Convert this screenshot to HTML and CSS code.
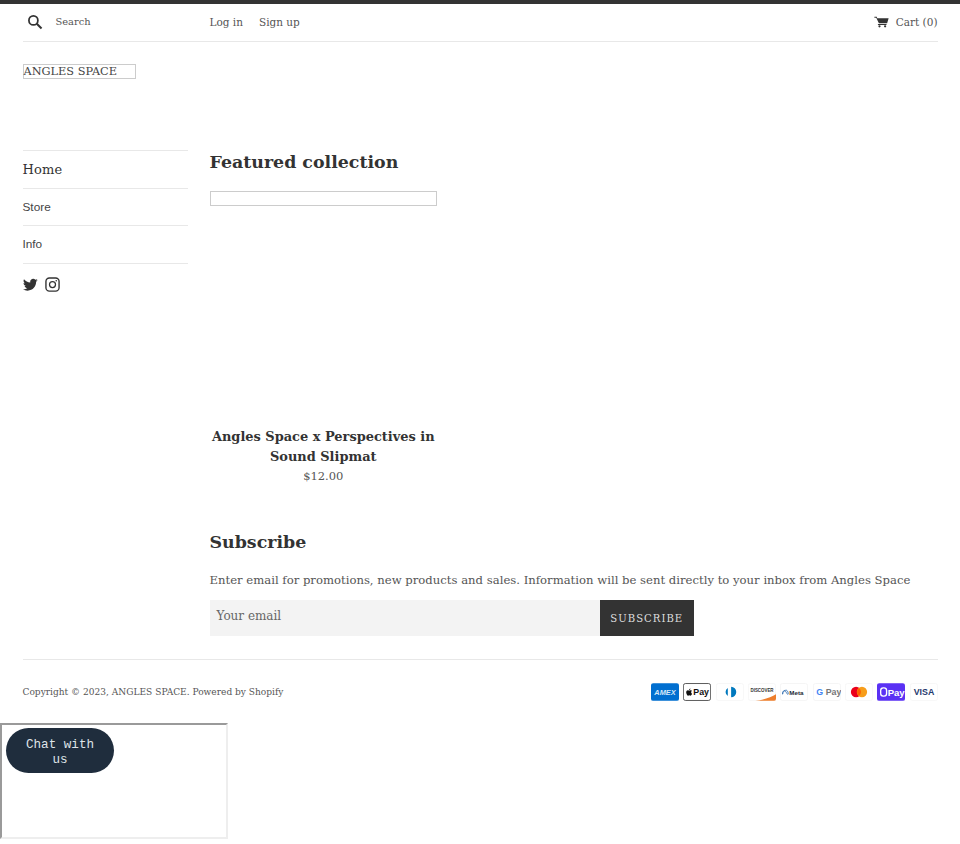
FILE: index.html
```html
<!DOCTYPE html>
<html lang="en">
<head>
<meta charset="utf-8">
<title>ANGLES SPACE</title>
<link rel="stylesheet" href="styles.css">
</head>
<body>
<div class="topbar"></div>
<div class="page">
  <header class="header">
    <form class="search">
      <svg class="search-icon" viewBox="0 0 20 20"><circle cx="8" cy="8" r="5.6" fill="none" stroke="#333" stroke-width="2.2"/><path d="M12.200 12.200l6 6" stroke="#333" stroke-width="2.500" fill="none"/></svg>
      <span class="search-label">Search</span>
    </form>
    <nav class="account"><a>Log in</a><a>Sign up</a></nav>
    <a class="cart">
      <svg class="cart-icon" viewBox="0 0 20 16"><path d="M.5 1h3.200l.6 2h15.200l-2 6.700H6.500L3 2.300H.5z" fill="#333"/><path d="M5.500 10.700h11.200v1.200H5z" fill="#333"/><circle cx="7.300" cy="13.800" r="1.500" fill="#333"/><circle cx="14.800" cy="13.800" r="1.500" fill="#333"/></svg>
      <span>Cart (0)</span>
    </a>
  </header>
  <div class="logo">ANGLES SPACE</div>
  <div class="layout">
    <aside class="sidebar">
      <ul class="menu">
        <li class="menu-item menu-active">Home</li>
        <li class="menu-item">Store</li>
        <li class="menu-item">Info</li>
      </ul>
      <div class="social">
        <svg class="social-icon" viewBox="0 0 24 24"><path fill="#333" d="M23.6 5.1c-.9.4-1.8.6-2.8.8 1-.6 1.8-1.5 2.1-2.7-.9.6-2 1-3.100 1.200C18.900 3.400 17.700 2.800 16.300 2.800c-2.700 0-4.800 2.200-4.800 4.800 0 .4 0 .8.100 1.100C7.600 8.500 4 6.600 1.600 3.600c-.4.700-.7 1.500-.7 2.400 0 1.700.9 3.200 2.100 4-.8 0-1.500-.2-2.200-.6v.1c0 2.300 1.700 4.300 3.900 4.700-.4.100-.8.200-1.300.2-.3 0-.6 0-.9-.1.6 1.900 2.400 3.300 4.500 3.300-1.600 1.300-3.700 2-6 2-.4 0-.8 0-1.100-.1C2 21 4.500 21.800 7.300 21.800c8.800 0 13.700-7.300 13.700-13.700v-.6c.9-.7 1.800-1.500 2.600-2.400z"/></svg>
        <svg class="social-icon" viewBox="0 0 24 24"><rect x="1.500" y="1.500" width="21" height="21" rx="5.500" fill="none" stroke="#333" stroke-width="2.200"/><circle cx="12" cy="12" r="4.800" fill="none" stroke="#333" stroke-width="2"/><circle cx="18" cy="6" r="1.300" fill="#333"/></svg>
      </div>
    </aside>
    <main class="main">
      <h2 class="section-title">Featured collection</h2>
      <div class="grid">
        <article class="product">
          <div class="product-image"></div>
          <h3 class="product-title">Angles Space x Perspectives in Sound Slipmat</h3>
          <div class="product-price">$12.00</div>
        </article>
      </div>
      <section class="subscribe">
        <h2 class="section-title">Subscribe</h2>
        <p class="subscribe-text">Enter email for promotions, new products and sales. Information will be sent directly to your inbox from Angles Space</p>
        <form class="subscribe-form">
          <div class="email">Your email</div>
          <div class="subscribe-btn">SUBSCRIBE</div>
        </form>
      </section>
    </main>
  </div>
  <footer class="footer">
    <div class="copyright">Copyright © 2023, ANGLES SPACE. Powered by Shopify</div>
    <div class="payments">
      <svg class="pay" viewBox="0 0 38 24"><rect width="38" height="24" rx="3" fill="#016fd0"/><text x="19" y="16" class="t-amex">AMEX</text></svg>
      <svg class="pay" viewBox="0 0 38 24"><rect x=".5" y=".5" width="37" height="23" rx="3" fill="#fff" stroke="#222"/><path fill="#111" d="M9.500 7.500c.5-.6.900-1.400.8-2.200-.7 0-1.600.5-2.100 1.100-.4.500-.8 1.300-.7 2.100.8 0 1.500-.4 2-1zm.8 1.200c-1.100-.1-2.100.6-2.600.6-.6 0-1.400-.6-2.300-.6-1.200 0-2.300.7-2.900 1.700-1.200 2.100-.3 5.300.9 7 .6.900 1.300 1.800 2.200 1.800.9 0 1.200-.6 2.300-.6s1.400.6 2.300.6c1 0 1.600-.9 2.200-1.700.7-1 1-1.900 1-2-.1 0-1.900-.7-1.900-2.800 0-1.800 1.400-2.600 1.500-2.700-.8-1.200-2-1.300-2.700-1.300z" transform="translate(3 3.500) scale(.7)"/><text x="14" y="16.500" class="t-pay">Pay</text></svg>
      <svg class="pay" viewBox="0 0 38 24"><rect x=".5" y=".5" width="37" height="23" rx="3" fill="#fff" stroke="#f4f4f4"/><path d="M17 6.500a6.500 6.500 0 000 11z" fill="#0079be" transform="translate(-1 0)"/><path d="M19 5a7 7 0 010 14z" fill="#0079be" transform="translate(1.500 0)"/></svg>
      <svg class="pay" viewBox="0 0 38 24"><rect x=".5" y=".5" width="37" height="23" rx="3" fill="#fff" stroke="#f4f4f4"/><path d="M10 24c12-1.500 22-5 28-9v6a3 3 0 01-3 3z" fill="#ee7f2d"/><text x="19" y="11.500" class="t-disc">DISCOVER</text></svg>
      <svg class="pay" viewBox="0 0 38 24"><rect x=".5" y=".5" width="37" height="23" rx="3" fill="#fff" stroke="#f2f2f2"/><path d="M3.500 15c0-5 2.500-6 4-4s2.500 5 3.500 4-1-5.500-2.500-5.500S3.500 11 3.500 15z" fill="none" stroke="#1c5fa8" stroke-width="1"/><text x="12.500" y="15.500" class="t-meta">Meta</text></svg>
      <svg class="pay" viewBox="0 0 38 24"><rect x=".5" y=".5" width="37" height="23" rx="3" fill="#fff" stroke="#f2f2f2"/><text x="4.500" y="16.500" class="t-gpay"><tspan class="g-blue">G</tspan> Pay</text></svg>
      <svg class="pay" viewBox="0 0 38 24"><rect x=".5" y=".5" width="37" height="23" rx="3" fill="#fff" stroke="#f4f4f4"/><circle cx="15" cy="12" r="7" fill="#eb001b"/><circle cx="23" cy="12" r="7" fill="#f79e1b"/><path d="M19 6.500a7 7 0 010 11 7 7 0 010-11z" fill="#ff5f00"/></svg>
      <svg class="pay" viewBox="0 0 38 24"><rect width="38" height="24" rx="3" fill="#5a31f4"/><rect x="5" y="6.500" width="8" height="11" rx="3.500" fill="none" stroke="#fff" stroke-width="1.800"/><text x="14.500" y="17" class="t-shop">Pay</text></svg>
      <svg class="pay" viewBox="0 0 38 24"><rect x=".5" y=".5" width="37" height="23" rx="3" fill="#fff" stroke="#f4f4f4"/><text x="19" y="16.500" class="t-visa">VISA</text></svg>
    </div>
  </footer>
</div>
<div class="chat-frame">
  <div class="chat-btn">Chat with us</div>
</div>
</body>
</html>
```
FILE: styles.css
```css
* { box-sizing: border-box; }
html, body { margin: 0; padding: 0; background: #fff; }
body { font-family: "DejaVu Serif", serif; font-size: 11px; color: #444; }
.topbar { height: 4px; background: #333; }
.page { padding: 0 22.500px; }
.header { display: flex; align-items: center; height: 38px; padding-bottom: 2px; border-bottom: 1px solid #e8e8e8; }
.search { width: 187px; display: flex; align-items: center; gap: 13px; padding-left: 4px; }
.search-icon { width: 16px; height: 16px; }
.search-label { font-size: 9.900px; color: #555; }
.account { display: flex; gap: 16px; font-size: 10.500px; color: #555; }
.cart { margin-left: auto; display: flex; align-items: center; gap: 7px; font-size: 10.500px; color: #555; }
.cart-icon { width: 15px; height: 12px; }
.logo { margin-top: 22px; width: 113px; height: 15px; border: 1px solid #ccc; font-size: 11.300px; line-height: 13px; color: #444; white-space: nowrap; }
.layout { display: grid; grid-template-columns: 165px 1fr; column-gap: 22px; margin-top: 71px; }
.menu { list-style: none; margin: 0; padding: 0; border-top: 1px solid #e8e8e8; }
.menu-item { height: 37.500px; display: flex; align-items: center; border-bottom: 1px solid #e8e8e8; font-family: "Liberation Sans", sans-serif; font-size: 11.800px; color: #444; }
.menu-active { font-family: "DejaVu Serif", serif; font-size: 13px; letter-spacing: .2px; color: #333; }
.social { display: flex; gap: 7.500px; margin-top: 13px; }
.social-icon { width: 15px; height: 15px; }
.main { min-width: 0; }
.section-title { margin: 0; font-family: "DejaVu Serif", serif; font-weight: 700; font-size: 17.400px; line-height: 24px; color: #333; }
.grid { width: 227.500px; margin-top: 17px; }
.product { text-align: center; }
.product-image { height: 15px; border: 1px solid #ccc; margin-bottom: 221px; }
.product-title { margin: 0; font-size: 12.950px; line-height: 20px; font-weight: 700; color: #333; }
.product-price { font-size: 11.500px; line-height: 18px; color: #555; }
.subscribe { margin-top: 45px; }
.subscribe-text { margin: 16px 0 0; font-size: 11.650px; line-height: 20px; color: #555; white-space: nowrap; }
.subscribe-form { display: flex; margin-top: 10px; }
.email { width: 390px; height: 36px; background: #f3f3f3; padding: 0 7px; font-size: 12px; line-height: 32px; color: #666; }
.subscribe-btn { width: 94.500px; height: 36px; background: #333; color: #ddd; font-size: 10.100px; letter-spacing: 1px; display: flex; align-items: center; justify-content: center; }
.footer { margin-top: 23px; border-top: 1px solid #e8e8e8; display: flex; align-items: center; justify-content: space-between; padding-top: 23px; }
.copyright { font-size: 9.050px; color: #555; }
.payments { display: flex; gap: 4.300px; }
.pay { width: 28px; height: 18px; }
.pay text { font-family: "Liberation Sans", sans-serif; font-weight: 700; }
.t-amex { font-size: 10px; fill: #d5e8f8; text-anchor: middle; font-style: italic; }
.t-pay { font-size: 12px; fill: #111; font-weight: 400; }
.t-disc { font-size: 6px; fill: #333; text-anchor: middle; }
.t-meta { font-size: 8.500px; fill: #1c2b33; }
.t-gpay { font-size: 12px; fill: #777; font-weight: 400; }
.g-blue { fill: #4285f4; }
.t-shop { font-size: 13px; fill: #fff; font-weight: 400; }
.t-visa { font-size: 12px; fill: #1f3a6e; text-anchor: middle; }
.chat-frame { margin-top: 22px; width: 228px; height: 116px; border: 2px inset #eee; padding: 3px 4px; }
.chat-btn { width: 108px; height: 45px; border-radius: 23px; background: #1f2d3d; color: #dfe3e8; font-family: "Liberation Mono", monospace; font-size: 12.600px; line-height: 15px; text-align: center; padding: 10px; }
```
